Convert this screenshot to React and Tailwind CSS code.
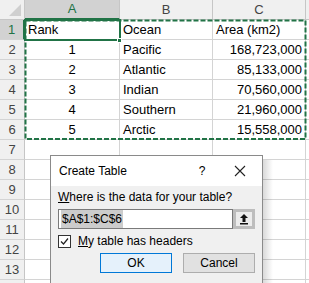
import React from 'react';

const cols = [
  { key: 'A', w: 'w-[95px]' },
  { key: 'B', w: 'w-[93px]' },
  { key: 'C', w: 'w-[93px]' },
];

const data = [
  ['Rank', 'Ocean', 'Area (km2)'],
  ['1', 'Pacific', '168,723,000'],
  ['2', 'Atlantic', '85,133,000'],
  ['3', 'Indian', '70,560,000'],
  ['4', 'Southern', '21,960,000'],
  ['5', 'Arctic', '15,558,000'],
];

const rowNums = [1, 2, 3, 4, 5, 6, 7, 8, 9, 10, 11, 12, 13, 14];

const Cell = ({ w, align, children }) => (
  <div
    className={`${w} h-[20px] shrink-0 border-r border-b border-[#d4d4d4] flex items-center px-[3px] text-[13px] text-black ${align}`}
  >
    {children}
  </div>
);

export default function App() {
  return (
    <div
      className="relative w-[309px] h-[283px] overflow-hidden bg-white"
      style={{ fontFamily: '"Liberation Sans", Arial, sans-serif' }}
    >
      {/* Column header row */}
      <div className="flex h-[20px]">
        <div className="relative w-[25px] h-[20px] shrink-0 bg-[#f0f0f0] border-r border-b border-[#c6c6c6]">
          <div className="absolute right-[3px] bottom-[3px] w-0 h-0 border-l-[12px] border-l-transparent border-b-[12px] border-b-[#cfcfcf]" />
        </div>
        {cols.map((c) => (
          <div
            key={c.key}
            className={`${c.w} h-[20px] shrink-0 flex items-center justify-center text-[13px] border-r ${
              c.key === 'A'
                ? 'bg-[#d2d2d2] text-[#217346] border-b-2 border-b-[#217346] border-r-[#c6c6c6]'
                : 'bg-[#f0f0f0] text-[#444] border-b border-[#c6c6c6]'
            }`}
          >
            {c.key}
          </div>
        ))}
        <div className="flex-1 h-[20px] bg-[#f0f0f0] border-b border-[#c6c6c6]" />
      </div>

      {/* Rows */}
      {rowNums.map((n) => {
        const row = data[n - 1];
        return (
          <div key={n} className="flex h-[20px]">
            <div
              className={`w-[25px] h-[20px] shrink-0 flex items-center justify-center text-[13px] border-b border-[#d4d4d4] ${
                n === 1
                  ? 'bg-[#d2d2d2] text-[#217346] border-r-2 border-r-[#217346]'
                  : 'bg-[#f0f0f0] text-[#444] border-r border-r-[#c6c6c6]'
              }`}
            >
              {n < 14 ? n : ''}
            </div>
            <Cell w="w-[95px]" align={n === 1 ? 'justify-start' : 'justify-center'}>
              {row && row[0]}
            </Cell>
            <Cell w="w-[93px]" align="justify-start">
              {row && row[1]}
            </Cell>
            <Cell w="w-[93px]" align={n === 1 ? 'justify-start' : 'justify-end'}>
              {row && row[2]}
            </Cell>
            <div className="flex-1 h-[20px] border-b border-[#d4d4d4]" />
          </div>
        );
      })}

      {/* Marching ants around A1:C6 */}
      <svg className="absolute left-0 top-0 pointer-events-none" width="309" height="283">
        <rect
          x="25.5"
          y="20.5"
          width="280"
          height="118.5"
          fill="none"
          stroke="#217346"
          strokeWidth="2"
          strokeDasharray="5 2"
        />
      </svg>

      {/* Active cell A1 */}
      <div className="absolute left-[24px] top-[19px] w-[97px] h-[22px] border-2 border-[#217346] pointer-events-none" />
      <div className="absolute left-[117px] top-[38px] w-[5px] h-[5px] bg-[#217346] border border-white" />

      {/* Dialog shadow */}
      <div className="absolute left-[263px] top-[160px] w-[10px] h-[130px] bg-gradient-to-r from-[#00000026] to-transparent" />

      {/* Create Table dialog */}
      <div className="absolute left-[50px] top-[155px] w-[213px] h-[140px] border border-[#8a8a8a] bg-[#f0f0f0] text-[12px] text-black">
        <div className="h-[30px] bg-white flex items-center pl-[8px]">
          <span className="flex-1">Create Table</span>
          <span className="w-[20px] text-center mr-[22px]">?</span>
          <svg width="12" height="12" viewBox="0 0 12 12" className="mr-[16px]">
            <path d="M1 1 L11 11 M11 1 L1 11" stroke="#222" strokeWidth="1.1" />
          </svg>
        </div>
        <div className="px-[7px] pt-[2px]">
          <div className="h-[18px] flex items-center">
            <span>
              <span className="underline">W</span>here is the data for your table?
            </span>
          </div>
          <div className="flex h-[20px] mt-[3px]">
            <div className="flex-1 bg-white border border-[#7a7a7a] flex items-center px-[2px]">
              <span className="bg-[#cccccc] px-[1px]">$A$1:$C$6</span>
            </div>
            <div className="w-[22px] border-[3px] border-[#bdbdbd] bg-[#ececec] flex items-center justify-center">
              <svg width="10" height="12" viewBox="0 0 10 12">
                <path d="M5 1 L9 5 H6.5 V9 H3.5 V5 H1 Z" fill="#111" />
                <rect x="1" y="10" width="8" height="1.5" fill="#111" />
              </svg>
            </div>
          </div>
          <div className="flex items-center h-[18px] mt-[3px]">
            <div className="w-[13px] h-[13px] bg-white border border-[#333] flex items-center justify-center">
              <svg width="9" height="9" viewBox="0 0 9 9">
                <path d="M1 4.5 L3.5 7 L8 1.5" fill="none" stroke="#222" strokeWidth="1.2" />
              </svg>
            </div>
            <span className="ml-[7px]">
              <span className="underline">M</span>y table has headers
            </span>
          </div>
          <div className="flex mt-[3px] pl-[42px] gap-[11px]">
            <div className="w-[73px] h-[20px] border border-[#0078d7] bg-[#e5f1fb] flex items-center justify-center">
              OK
            </div>
            <div className="w-[73px] h-[20px] border border-[#adadad] bg-[#e1e1e1] flex items-center justify-center">
              Cancel
            </div>
          </div>
        </div>
      </div>
    </div>
  );
}
